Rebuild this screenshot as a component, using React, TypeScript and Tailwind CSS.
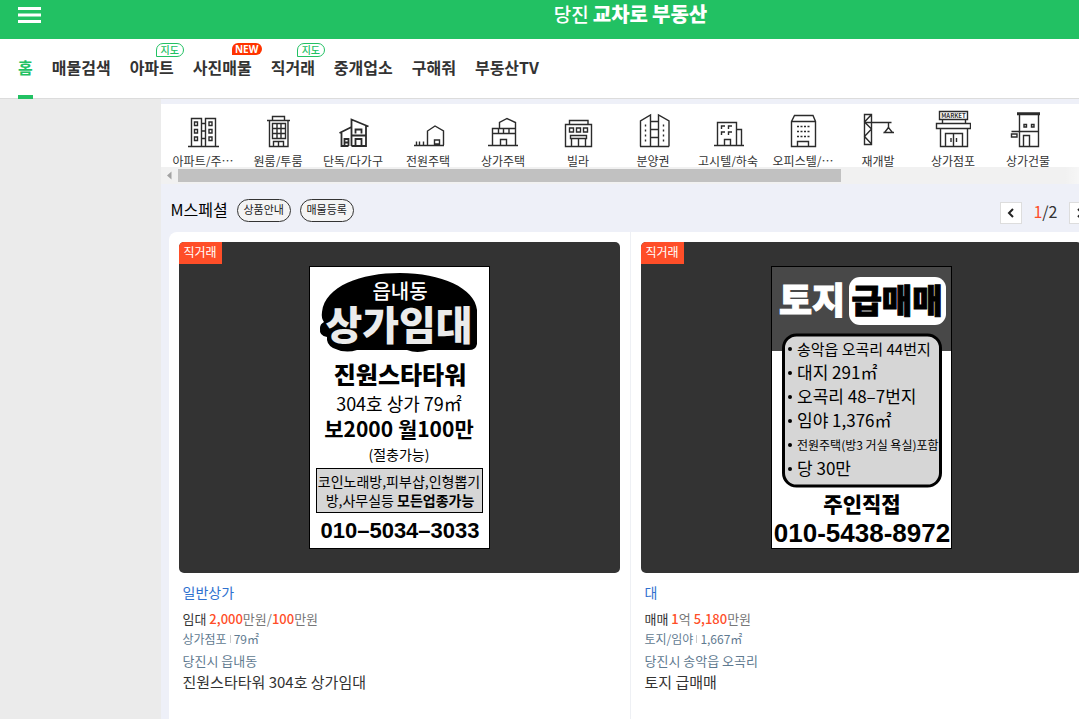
import React from "react";

const KR = "font-['Noto_Sans_CJK_KR','Noto_Sans',sans-serif]";

type NavItem = { label: string; badge?: "map" | "new"; active?: boolean };

const NAV: NavItem[] = [
  { label: "홈", active: true },
  { label: "매물검색" },
  { label: "아파트", badge: "map" },
  { label: "사진매물", badge: "new" },
  { label: "직거래", badge: "map" },
  { label: "중개업소" },
  { label: "구해줘" },
  { label: "부동산TV" },
];

const CATEGORIES: { label: string; icon: React.ReactNode }[] = [
  {
    label: "아파트/주…",
    icon: (
      <>
        <path d="M3 37.5H34M6.5 37V9.5H16.5V37M20.5 37V9.5H30.5V37M16.5 14.5H20.5M16.5 22H20.5M16.5 29.5H20.5" />
        <path d="M9.500 13h3v3.500h-3zM9.500 20.500h3v3.500h-3zM9.500 28h3v3.500h-3zM24 13h3v3.500h-3zM24 20.500h3v3.500h-3zM24 28h3v3.500h-3z" />
      </>
    ),
  },
  {
    label: "원룸/투룸",
    icon: (
      <path d="M12.500 11.500V7.500H24.500V11.500M7 11.500H30M9.500 11.500V37.500H28V11.500M12.500 14.500H25.500V29.500H12.500zM17 14.500V29.500M21 14.500V29.500M12.500 19.500H25.500M12.500 24.500H25.500M13.500 37.500V32.500H23.500V37.500M18.500 32.500V37.500" />
    ),
  },
  {
    label: "단독/다가구",
    icon: (
      <path
        strokeWidth="1.8"
        d="M16.500 37V10.500L33.500 17.500M4.500 24L16.500 18M6.500 23.500V37H13.500M31 17V37H16.500M16.500 26.500H31M20.500 24.500V20.500H26.500V24.500M20.500 37V30H26.500V37M9.500 37V30H13.500V37M9.500 33.500H13.500"
      />
    ),
  },
  {
    label: "전원주택",
    icon: (
      <path d="M4 36.500H34M6.500 36V32.500M9.500 36V32.500M13.500 36V32.500M17.500 36V22L25 17L33.500 22V36M24.500 31H29.500V35H24.500z" />
    ),
  },
  {
    label: "상가주택",
    icon: (
      <path d="M3 36.500H33M7.500 36V19.500H30.500V36M7.500 24.500H30.500M13.500 19.500V24.500M18.500 19.500V24.500M24 19.500V24.500M14.500 19.500V13.500L22 9.500L30.500 13.500V19.500M15.500 36V30.500H21.500V36" />
    ),
  },
  {
    label: "빌라",
    icon: (
      <path d="M9.500 15.500V11.500H28V15.500M5.500 15.500H31.500V37.500H5.500zM9.500 19H13.500V23H9.500zM16.500 19H20.500V23H16.500zM23.500 19H27.500V23H23.500zM10.500 26.500H26.500V29.500H10.500zM11.500 29.500V37M18.500 29.500V37M25.500 29.500V37" />
    ),
  },
  {
    label: "분양권",
    icon: (
      <>
        <path d="M5.500 37.500V12L15.500 6V37.500M23.500 37.500V6L34 12V37.500M5 37.500H34M15.500 12.500H23.500M15.500 20.500H23.500M15.500 28.500H23.500" />
        <path d="M10.500 15.500V33M28.500 15.500V33" strokeDasharray="2 3" />
      </>
    ),
  },
  {
    label: "고시텔/하숙",
    icon: (
      <path d="M4 36.500H34M7.500 36V13.500H26.500V36M26.500 20.500H31.500V36M11.500 20V17H15M18.500 20V17H22M11.500 26V23H15M18.500 26V23H22M14.500 36V30.500H20.500V36" />
    ),
  },
  {
    label: "오피스텔/…",
    icon: (
      <>
        <path d="M6.500 12.500L9.500 6.500H28L30.500 12.500V37.500H6.500zM6.500 12.500H30.500M12.500 37.500V32.500H23.500V37.500" />
        <path d="M12 17.500H25M12 22.500H25M12 27.500H25" strokeDasharray="2 1.5" />
      </>
    ),
  },
  {
    label: "재개발",
    icon: (
      <>
        <path d="M4.500 5.500H11.500V35.500H4.500zM11.500 5.500L4.500 13L11.500 20L4.500 27.500L11.500 35M4.500 13.500H31.500M28.500 13.500V19" />
        <path d="M28.500 18.500L24.500 23.500H32.500zM23.500 23.500H34" />
      </>
    ),
  },
  {
    label: "상가점포",
    icon: (
      <>
        <path d="M4.500 2.500H32.500V10.500H4.500zM7.500 10.500V14.500M30.500 10.500V14.500M1.500 14.500H35.500V19.500H1.500zM5.500 19.500V37.500H32.500V19.500M10.500 37.500V24.500H27.500V37.500M18.500 24.500V37.500M16 29V33M21.500 29V33" />
        <text x="18.500" y="8.500" textAnchor="middle" fontSize="6" fontWeight="700" fill="#333" stroke="none">
          MARKET
        </text>
      </>
    ),
  },
  {
    label: "상가건물",
    icon: (
      <path d="M7 4H30M7 5.500H30M9.500 5V37.500H28.500V5M14 15.500H16.500V18H14zM21.500 15.500H24V18H21.500zM1.500 22.500H28.500M1.500 25H7V28H1.500zM13.500 37.500V26.500H19.500V37.500" />
    ),
  },
];

function Header() {
  return (
    <header className="flex h-[39px] items-start justify-center bg-[#22c163]">
      <div className="flex w-0 flex-1">
        <button type="button" aria-label="메뉴" className="ml-[17px] mt-[3px] text-white">
          <svg width="24" height="24" viewBox="0 0 24 24" fill="none" stroke="currentColor" strokeWidth="3">
            <path d="M1 5.500H24M1 12H24M1 18.500H24" />
          </svg>
        </button>
      </div>
      <a href="#home" className="flex items-baseline gap-1 leading-7 text-white">
        <span className="text-[19px] font-medium">당진</span>
        <span className="text-xl font-black">교차로</span>
        <span className="text-xl font-black">부동산</span>
      </a>
      <div className="w-0 flex-1" />
    </header>
  );
}

function Badge({ kind }: { kind: "map" | "new" }) {
  if (kind === "new") {
    return (
      <span className="absolute -right-2.5 top-1 flex h-3 w-[30px] items-center justify-center rounded-full rounded-bl-none bg-[#ff3300] font-['Open_Sans',sans-serif] text-[10px] font-bold text-white">
        NEW
      </span>
    );
  }
  return (
    <span className="absolute -right-2.5 top-1 flex h-3.5 w-7 items-center justify-center rounded-full rounded-bl-none border border-[#22c163] bg-white pb-0.5 text-[10px] font-medium text-[#22c163]">
      지도
    </span>
  );
}

function Nav() {
  return (
    <nav className="border-b border-[#dcdcdc] bg-white">
      <ul className="flex gap-[19px] pl-[18px]">
        {NAV.map((n) => (
          <li key={n.label} className="relative">
            <a
              href="#nav"
              className={
                n.active
                  ? "flex h-[59px] items-center pb-1 text-base font-bold text-[#22c163]"
                  : "flex h-[59px] items-center pb-1 text-base font-bold text-[#333]"
              }
            >
              {n.label}
            </a>
            {n.badge && <Badge kind={n.badge} />}
            {n.active && <span className="absolute inset-x-0 -bottom-px h-1 bg-[#22c163]" />}
          </li>
        ))}
      </ul>
    </nav>
  );
}

function Categories() {
  return (
    <section className="relative mt-[5px]">
      <ul className="flex h-[63px] overflow-hidden bg-white pl-[5px] pt-[5px]">
        {CATEGORIES.map((c) => (
          <li key={c.label} className="w-[75px] shrink-0">
            <a href="#category" className="flex flex-col items-center">
              <svg width="36" height="40" viewBox="0 0 36 40" fill="none" stroke="#2b2b2b" strokeWidth="1.4">
                {c.icon}
              </svg>
              <span className="mt-[3px] whitespace-nowrap text-xs leading-[18px] text-[#333]">{c.label}</span>
            </a>
          </li>
        ))}
      </ul>
      <div className="flex h-[17px] items-center bg-[#f1f1f1]">
        <svg width="17" height="17" viewBox="0 0 17 17" fill="#a3a3a3">
          <path d="M6 8.500L10.500 4.500V12.500z" />
        </svg>
        <div className="h-[13px] w-[663px] bg-[#c1c1c1]" />
      </div>
      <div className="absolute inset-y-0 right-0 w-9 bg-linear-to-r from-transparent to-white" />
    </section>
  );
}

function PosterOne() {
  return (
    <svg width="181" height="283" viewBox="0 0 181 283" textAnchor="middle" role="img" aria-label="상가임대 광고">
      <rect x="0.500" y="0.500" width="180" height="282" fill="#fff" stroke="#000" />
      <path d="M13 46C16 20 52 7 91 7C132 7 166 22 168 44V78Q167 84 160 84L120 84Q108 88 98 84L48 84Q36 88 24 82Q17 78 18 71Q10 70 11 62Q11 58 15 56Q12 52 13 46z" fill="#000" />
      <text x="91" y="33" fontSize="20" fontWeight="500" fill="#fff">읍내동</text>
      <text x="90" y="74" fontSize="40" fontWeight="900" fill="#ebebeb">상가임대</text>
      <text x="91" y="118" fontSize="24" fontWeight="900">진원스타타워</text>
      <text x="90" y="145" fontSize="18">304호 상가 79㎡</text>
      <text x="90" y="171" fontSize="21" fontWeight="700">보2000 월100만</text>
      <text x="90" y="194" fontSize="14">(절충가능)</text>
      <rect x="7.500" y="202.500" width="166" height="44" fill="#d6d6d6" stroke="#000" />
      <text x="90" y="221" fontSize="14">코인노래방,피부샵,인형뽑기</text>
      <text x="91" y="240" fontSize="14">
        방,사무실등 <tspan fontWeight="700">모든업종가능</tspan>
      </text>
      <text x="91" y="272" fontSize="22" fontWeight="700" fontFamily="'Liberation Sans', sans-serif">010–5034–3033</text>
    </svg>
  );
}

function PosterTwo() {
  return (
    <svg width="181" height="283" viewBox="0 0 181 283" role="img" aria-label="토지 급매매 광고">
      <rect x="0.500" y="0.500" width="180" height="282" fill="#fff" stroke="#000" />
      <rect x="1" y="1" width="179" height="84" fill="#484848" />
      <text x="8" y="48" fontSize="36" fontWeight="900" fill="#fff" stroke="#fff">토지</text>
      <rect x="78" y="11" width="97" height="48" rx="11" fill="#fff" />
      <text x="126" y="47" fontSize="33" fontWeight="900" textAnchor="middle" stroke="#000">급매매</text>
      <rect x="12.500" y="69" width="157" height="151" rx="13" fill="#d6d6d6" stroke="#000" strokeWidth="3" />
      {[83, 107, 131, 155, 179, 203].map((y) => (
        <circle key={y} cx="19" cy={y} r="2" />
      ))}
      <text x="26" y="89" fontSize="15">송악읍 오곡리 44번지</text>
      <text x="26" y="113" fontSize="17">대지 291㎡</text>
      <text x="26" y="137" fontSize="17">오곡리 48–7번지</text>
      <text x="26" y="161" fontSize="17">임야 1,376㎡</text>
      <text x="26" y="184" fontSize="12">전원주택(방3 거실 욕실)포함</text>
      <text x="26" y="209" fontSize="17">당 30만</text>
      <text x="91" y="246" fontSize="21" fontWeight="900" textAnchor="middle">주인직접</text>
      <text x="91" y="276" fontSize="26" fontWeight="700" textAnchor="middle" fontFamily="'Liberation Sans', sans-serif">
        010-5438-8972
      </text>
    </svg>
  );
}

type Listing = {
  poster: React.ReactNode;
  kind: string;
  price: React.ReactNode;
  use: string;
  area: string;
  place: string;
  title: string;
};

function Amount({ children }: { children: React.ReactNode }) {
  return <span className="font-medium text-[#ff4e28]">{children}</span>;
}

const LISTINGS: Listing[] = [
  {
    poster: <PosterOne />,
    kind: "일반상가",
    price: (
      <>
        <span className="text-[#333]">임대</span> <Amount>2,000</Amount>만원/<Amount>100</Amount>만원
      </>
    ),
    use: "상가점포",
    area: "79㎡",
    place: "당진시 읍내동",
    title: "진원스타타워 304호 상가임대",
  },
  {
    poster: <PosterTwo />,
    kind: "대",
    price: (
      <>
        <span className="text-[#333]">매매</span> <Amount>1</Amount>억 <Amount>5,180</Amount>만원
      </>
    ),
    use: "토지/임야",
    area: "1,667㎡",
    place: "당진시 송악읍 오곡리",
    title: "토지 급매매",
  },
];

function Card({ item }: { item: Listing }) {
  return (
    <li className="flex-1 border-r border-[#eef0f4] p-2.5">
      <a href="#listing" className="block">
        <div className="relative flex h-[331px] items-start justify-center overflow-hidden rounded-[5px] bg-[#333] pt-6">
          {item.poster}
          <span className="absolute left-0 top-0 flex h-[22px] w-[43px] items-center justify-center bg-[#ff4e28] pb-0.5 text-xs text-white">
            직거래
          </span>
        </div>
        <div className="pl-1 pt-[9px]">
          <p className="text-sm leading-5 text-[#2f71cf]">{item.kind}</p>
          <p className="mt-2 text-[13px] leading-[18px] text-[#777]">{item.price}</p>
          <p className="mt-px flex items-center gap-[3px] text-xs leading-5 text-[#5f7a90]">
            <span>{item.use}</span>
            <span className="h-2 w-px bg-[#ccc]" />
            <span>{item.area}</span>
          </p>
          <p className="mt-px text-[13px] leading-[22px] text-[#5f7a90]">{item.place}</p>
          <p className="text-[15px] leading-5 text-[#333]">{item.title}</p>
        </div>
      </a>
    </li>
  );
}

function Chip({ children }: { children: React.ReactNode }) {
  return (
    <button
      type="button"
      className="flex h-[23px] w-[54px] items-center justify-center rounded-full border border-[#333] bg-[#f4f4f4] pb-0.5 text-[11px] text-[#222]"
    >
      {children}
    </button>
  );
}

function PageButton({ label, d }: { label: string; d: string }) {
  return (
    <button
      type="button"
      aria-label={label}
      className="flex size-[22px] items-center justify-center border border-[#ddd] bg-white"
    >
      <svg width="10" height="12" viewBox="0 0 10 12" fill="none" stroke="#222" strokeWidth="2">
        <path d={d} />
      </svg>
    </button>
  );
}

export default function App() {
  return (
    <div className={`${KR} overflow-x-hidden`}>
      <div className="flex min-h-screen min-w-[1261px] flex-col">
        <Header />
        <Nav />
        <div className="flex flex-1 justify-center bg-[#ebebeb]">
          <main className="flex w-[940px] flex-col bg-[#eef0f8]">
            <Categories />
            <section className="flex flex-1 flex-col px-2">
              <div className="flex h-12 items-center pt-[5px]">
                <h2 className="ml-0.5 mr-[9px] pb-1 text-base text-black">M스페셜</h2>
                <div className="flex gap-[9px]">
                  <Chip>상품안내</Chip>
                  <Chip>매물등록</Chip>
                </div>
                <div className="ml-auto mr-0.5 flex items-center gap-[11px] pt-1">
                  <PageButton label="이전" d="M7 2L3 6L7 10" />
                  <span className="pb-1 text-base leading-5 text-[#333]">
                    <span className="text-[#ff4e28]">1</span>/2
                  </span>
                  <PageButton label="다음" d="M3 2L7 6L3 10" />
                </div>
              </div>
              <ul className="flex flex-1 rounded-t-lg bg-white">
                {LISTINGS.map((l) => (
                  <Card key={l.title} item={l} />
                ))}
              </ul>
            </section>
          </main>
        </div>
      </div>
    </div>
  );
}
